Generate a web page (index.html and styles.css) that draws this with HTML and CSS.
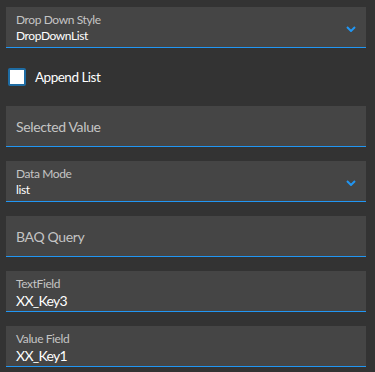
FILE: index.html
```html
<!DOCTYPE html>
<html lang="en">
<head>
    <meta charset="UTF-8">
    <meta name="viewport" content="width=device-width, initial-scale=1.0">
    <title>Combo Properties</title>
    <link rel="stylesheet" href="styles.css">
</head>
<body>
    <div class="panel">
        <div class="field select">
            <div class="field-text">
                <div class="label">Drop Down Style</div>
                <div class="value">DropDownList</div>
            </div>
            <svg class="chevron" width="10" height="6" viewBox="0 0 10 6"><path d="M1 1 L5 5 L9 1" fill="none" stroke="#2196f3" stroke-width="2"/></svg>
        </div>

        <label class="check-row">
            <span class="checkbox"></span>
            <span class="check-label">Append List</span>
        </label>

        <div class="field empty">
            <div class="placeholder">Selected Value</div>
        </div>

        <div class="field select">
            <div class="field-text">
                <div class="label">Data Mode</div>
                <div class="value">list</div>
            </div>
            <svg class="chevron" width="10" height="6" viewBox="0 0 10 6"><path d="M1 1 L5 5 L9 1" fill="none" stroke="#2196f3" stroke-width="2"/></svg>
        </div>

        <div class="field empty">
            <div class="placeholder">BAQ Query</div>
        </div>

        <div class="field">
            <div class="field-text">
                <div class="label">TextField</div>
                <div class="value big">XX_Key3</div>
            </div>
        </div>

        <div class="field">
            <div class="field-text">
                <div class="label">Value Field</div>
                <div class="value big">XX_Key1</div>
            </div>
        </div>
    </div>
</body>
</html>
```

FILE: styles.css
```css
body {
    margin: 0;
    padding: 0;
    background-color: #333333;
    color: white;
    font-family: Lato, "Noto Sans", sans-serif;
    overflow: hidden;
}

.panel {
    display: flex;
    flex-direction: column;
    gap: 14px;
    padding: 7px 9px 0 6px;
}

.field {
    display: flex;
    align-items: center;
    height: 40px;
    background-color: #454545;
    border-bottom: 1px solid #2196f3;
    padding: 0 10px;
}

.field-text {
    flex: 1;
    align-self: flex-start;
    padding-top: 6px;
}

.label {
    color: #c4c4c4;
    font-size: 12px;
    line-height: 14px;
    letter-spacing: -0.4px;
}

.value {
    color: white;
    font-size: 12px;
    line-height: 16px;
    letter-spacing: -0.4px;
    margin-top: 1px;
}

.value.big {
    font-size: 14px;
    line-height: 18px;
    letter-spacing: -0.7px;
}

.placeholder {
    color: #c4c4c4;
    font-size: 14px;
    letter-spacing: -0.35px;
}

.chevron {
    margin-top: 4px;
}

.check-row {
    display: flex;
    align-items: center;
    gap: 9px;
    height: 30px;
    margin-left: 2px;
}

.checkbox {
    width: 14px;
    height: 14px;
    background: white;
    border: 2px solid #1e6ca3;
    border-radius: 2px;
}

.check-label {
    font-size: 13.5px;
    letter-spacing: -0.5px;
}
```
